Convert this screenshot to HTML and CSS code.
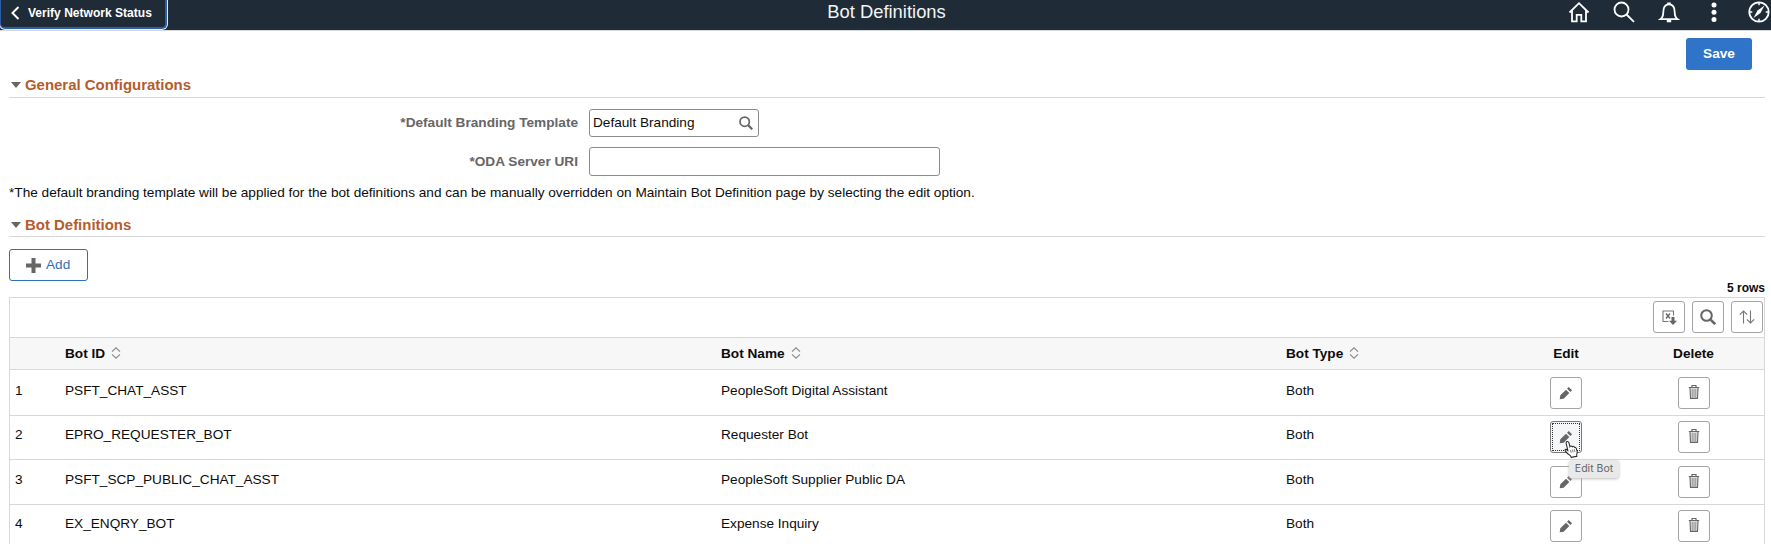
FILE: index.html
```html
<!DOCTYPE html>
<html lang="en">
<head>
<meta charset="utf-8">
<title>Bot Definitions</title>
<link rel="stylesheet" href="styles.css">
</head>
<body>
<svg class="defs" aria-hidden="true">
  <symbol id="pencil" viewBox="0 0 16 16"><path d="M.8 15.200l.7-4.500L8 4.200l3.800 3.800-6.500 6.500zM9.200 3l1.900-1.900 3.800 3.800L13 6.800z"/></symbol>
  <symbol id="trash" viewBox="0 0 12 16"><path d="M.8 3.500h10.400M4 3V1.500h4V3" fill="none" stroke="#666" stroke-width="1.200"/><path d="M2 4l.5 10.400h7L10 4" fill="#ddd" stroke="#666" stroke-width="1.100"/><path d="M4.300 5v8.500M6 5v8.500M7.700 5v8.500" stroke="#888" stroke-width=".8"/></symbol>
  <symbol id="sort" viewBox="0 0 10 12"><path d="M1 4.700L5 .8l4 3.900M1 7.300l4 3.900 4-3.900" fill="none" stroke="#888" stroke-width="1.100"/></symbol>
  <symbol id="lens" viewBox="0 0 16 16"><circle cx="6.500" cy="6.500" r="5.300" fill="none" stroke="currentColor" stroke-width="2"/><path d="M10.300 10.300l4.900 4.900" stroke="currentColor" stroke-width="2.600"/></symbol>
</svg>

<header class="banner">
  <button class="back"><svg width="9" height="14" viewBox="0 0 9 14"><path d="M7.500 1L1.500 7l6 6" fill="none" stroke="#fff" stroke-width="2"/></svg>Verify Network Status</button>
  <h1 class="title">Bot Definitions</h1>
  <nav class="actions">
    <svg width="22" height="22" viewBox="0 0 22 22"><path d="M1.500 11.500L11 2.200l9.500 9.300M4 9.500V20.300h4.700V13.800h4.600v6.500H18V9.500" /></svg>
    <svg width="22" height="22" viewBox="0 0 22 22"><circle cx="8.500" cy="8.500" r="7"/><path d="M13.500 13.500l7.500 7.300"/></svg>
    <svg width="22" height="22" viewBox="0 0 22 22"><path d="M2.300 18.200c2.400-1.600 3-4 3-7.200 0-4.800 2-7.700 5.700-7.700s5.700 2.900 5.700 7.700c0 3.200.6 5.600 3 7.200z"/><path d="M9.200 2.500h3.600M8.800 20.200h4.400" stroke-width="2.200"/></svg>
    <svg width="22" height="22" viewBox="0 0 22 22"><g fill="#fff" stroke="none"><circle cx="11" cy="4" r="2.500"/><circle cx="11" cy="11.200" r="2.500"/><circle cx="11" cy="18.500" r="2.500"/></g></svg>
    <svg width="22" height="22" viewBox="0 0 22 22"><circle cx="11" cy="11" r="9.700"/><path d="M11 2v2.300M11 17.700V20M2 11h2.300M17.700 11H20" stroke-width="1.500"/><path d="M5.500 17l4-7.500 7-5-4 7.500z" fill="#fff" stroke="none"/></svg>
  </nav>
</header>

<main class="page">
  <div class="save-row"><button class="save">Save</button></div>

  <h2 class="section general"><i class="caret"></i>General Configurations</h2>
  <div class="form">
    <label class="label">*Default Branding Template</label>
    <div class="field lookup"><span>Default Branding</span><svg class="look" width="14" height="14" viewBox="0 0 16 16"><use href="#lens" width="16" height="16"/></svg></div>
    <label class="label">*ODA Server URI</label>
    <div class="field uri"></div>
  </div>
  <p class="note">*The default branding template will be applied for the bot definitions and can be manually overridden on Maintain Bot Definition page by selecting the edit option.</p>

  <h2 class="section bots"><i class="caret"></i>Bot Definitions</h2>
  <button class="add"><svg width="15" height="15" viewBox="0 0 15 15"><path d="M7.500 0v15M0 7.500h15" stroke="#666" stroke-width="4"/></svg>Add</button>
  <div class="count">5 rows</div>

  <div class="grid">
    <div class="toolbar">
      <button class="icon-btn"><svg width="15" height="15" viewBox="0 0 15 15"><path d="M11.500 5.500V1H1v10.500h5.500" fill="none" stroke="#777" stroke-width="1.100" /><path d="M4 3.500l4 5M8 3.500l-4 5" stroke="#666" stroke-width="1.400"/><path d="M9.500 7h3v3.700H15L11 14.900l-4-4.200h2.500z" fill="#666"/></svg></button>
      <button class="icon-btn"><svg width="16" height="16"><use href="#lens"/></svg></button>
      <button class="icon-btn"><svg width="16" height="14" viewBox="0 0 16 14"><path d="M4.500 13.500V1M.8 4.700L4.500 1l3.700 3.700M11.500.5V13M7.800 9.300l3.700 3.700 3.700-3.700" fill="none" stroke="#777" stroke-width="1.100"/></svg></button>
    </div>
    <div class="row head">
      <span></span>
      <span>Bot ID<svg class="sort" width="10" height="12"><use href="#sort"/></svg></span>
      <span>Bot Name<svg class="sort" width="10" height="12"><use href="#sort"/></svg></span>
      <span>Bot Type<svg class="sort" width="10" height="12"><use href="#sort"/></svg></span>
      <span class="center">Edit</span>
      <span class="center">Delete</span>
    </div>
    <div class="row first">
      <span>1</span><span>PSFT_CHAT_ASST</span><span>PeopleSoft Digital Assistant</span><span>Both</span>
      <div class="cell"><button class="icon-btn"><svg class="pencil"><use href="#pencil"/></svg></button></div>
      <div class="cell"><button class="icon-btn"><svg class="trash"><use href="#trash"/></svg></button></div>
    </div>
    <div class="row">
      <span>2</span><span>EPRO_REQUESTER_BOT</span><span>Requester Bot</span><span>Both</span>
      <div class="cell"><button class="icon-btn focused"><svg class="pencil"><use href="#pencil"/></svg></button>
        <div class="tip">Edit Bot</div>
        <svg class="hand" viewBox="0 0 16 18"><path d="M4 10L2.300 3.100Q2 1.300 3.300 1t1.900 1.200L6.300 6.500q.4-.9 1.500-.7.7.1 1 .8.5-.7 1.500-.3.600.2.8.9 1.500-.3 2 1.200l.9 3.200q.3 1.800-.5 3.200l.2 2-6 1.100-.7-1.600Q4 14.700 1.300 11q-.6-1.300.5-1.600 1.100-.1 2.200 1.200z" fill="#fff" stroke="#222" stroke-width="1.100"/><path d="M7 10l.7 3M9 9.600l.7 3M11 9.200l.7 3" stroke="#555" stroke-width=".8"/></svg>
      </div>
      <div class="cell"><button class="icon-btn"><svg class="trash"><use href="#trash"/></svg></button></div>
    </div>
    <div class="row">
      <span>3</span><span>PSFT_SCP_PUBLIC_CHAT_ASST</span><span>PeopleSoft Supplier Public DA</span><span>Both</span>
      <div class="cell"><button class="icon-btn"><svg class="pencil"><use href="#pencil"/></svg></button></div>
      <div class="cell"><button class="icon-btn"><svg class="trash"><use href="#trash"/></svg></button></div>
    </div>
    <div class="row">
      <span>4</span><span>EX_ENQRY_BOT</span><span>Expense Inquiry</span><span>Both</span>
      <div class="cell"><button class="icon-btn"><svg class="pencil"><use href="#pencil"/></svg></button></div>
      <div class="cell"><button class="icon-btn"><svg class="trash"><use href="#trash"/></svg></button></div>
    </div>
  </div>
</main>
</body>
</html>
```
FILE: styles.css
```css
* { box-sizing: border-box; }
body {
  margin: 0;
  height: 544px;
  overflow: hidden;
  background: #fff;
  color: #0c0c0c;
  font: 13.630px/16px "Liberation Sans", Arial, sans-serif;
}
.defs { position: absolute; width: 0; height: 0; }
svg { display: block; flex: none; }
button { font: inherit; padding: 0; margin: 0; }
h1, h2, p { margin: 0; }

.banner {
  display: grid;
  grid-template-columns: 1fr auto 1fr;
  height: 31px;
  background: #1f2b37;
  border-bottom: 1px solid #d5d9dd;
}
.back {
  display: flex;
  gap: 8px;
  width: 167px;
  height: 29px;
  padding: 0 0 2px 10px;
  align-items: center;
  justify-self: start;
  background: #1f2b37;
  color: #fff;
  border: 2px solid #2c5fa8;
  border-top: 0;
  border-left-width: 1px;
  border-radius: 0 0 5px 5px;
  box-shadow: 0 0 0 1px #e8eef5;
  font-weight: bold;
  font-size: 12.050px;
}
.title {
  padding-left: 2px;
  color: #f2f4f6;
  font-size: 18.400px;
  font-weight: normal;
  line-height: 24px;
}
.actions {
  display: flex;
  gap: 23px;
  justify-content: flex-end;
  padding: 1px 1px 0 0;
}
.actions svg { fill: none; stroke: #fff; stroke-width: 1.800; }

.page { padding: 0 6px 0 9px; }
.save-row { display: flex; justify-content: flex-end; padding: 7px 13px 0 0; }
.save {
  width: 66px;
  height: 32px;
  border: 0;
  border-radius: 3px;
  background: #2f74c9;
  color: #fff;
  font-weight: bold;
}

.section {
  display: flex;
  align-items: center;
  gap: 4px;
  height: 27px;
  padding: 3px 0 0 2px;
  border-bottom: 1px solid #d8d8d8;
  color: #b55c2c;
  font-size: 14.950px;
}
.caret {
  border: 5.500px solid transparent;
  border-top: 6px solid #666;
  border-bottom: 0;
}
.general { height: 28px; }

.form {
  display: grid;
  grid-template-columns: 569px 351px;
  column-gap: 11px;
  row-gap: 10px;
  align-items: center;
  margin-top: 11px;
}
.label { color: #666; font-weight: bold; text-align: right; }
.field {
  height: 29px;
  border: 1px solid #8c8c8c;
  border-radius: 3px;
  padding: 0 5px 0 3px;
}
.lookup {
  display: flex;
  align-items: center;
  justify-content: space-between;
  width: 170px;
  height: 28px;
}
.look { color: #666; }
.note { margin-top: 9px; white-space: nowrap; }

.bots { margin-top: 9px; }
.add {
  display: flex;
  align-items: center;
  gap: 5px;
  width: 79px;
  height: 32px;
  margin-top: 12px;
  padding-left: 16px;
  background: #fff;
  border: 1px solid #2f70bd;
  border-radius: 3px;
  color: #2f6fc0;
}
.count {
  height: 16px;
  font-size: 12px;
  font-weight: bold;
  line-height: 15px;
  text-align: right;
}

.grid { border: 1px solid #d8d8d8; border-bottom: 0; }
.toolbar {
  display: flex;
  justify-content: flex-end;
  gap: 7px;
  height: 39px;
  padding: 3px 1px 0 0;
}
.icon-btn {
  display: grid;
  place-items: center;
  width: 32px;
  height: 32px;
  background: #fff;
  border: 1px solid #a3a3a8;
  border-radius: 3px;
  color: #666;
}
.row {
  display: grid;
  grid-template-columns: 50px 656px 565px 216px 128px 1fr;
  height: 44.600px;
  padding: 11.600px 7px 0 5px;
  border-bottom: 1px solid #d8d8d8;
}
.row.first { height: 45.600px; padding-top: 12.600px; }
.row.head {
  height: 33px;
  padding-top: 7.500px;
  background: #f7f7f7;
  border-top: 1px solid #d8d8d8;
  font-weight: bold;
}
.head span { display: flex; gap: 6px; }
.head .center { justify-content: center; }
.sort { margin-top: 1px; }
.cell { position: relative; display: flex; justify-content: center; }
.cell > .icon-btn { margin-top: -6px; }
.pencil { width: 14px; height: 14px; fill: #666; }
.trash { width: 12px; height: 16px; margin-top: -2px; }
.focused { border-color: #777; background: #f4f6f8; outline: 1px dotted #333; outline-offset: -3px; }
.tip {
  position: absolute;
  z-index: 2;
  left: 67px;
  top: 33px;
  width: 50px;
  height: 18px;
  background: #e9e9e9;
  border-radius: 3px;
  box-shadow: 0 1px 3px #bbb;
  color: #666;
  font: 10.500px/18px Inter, sans-serif;
  text-align: center;
}
.hand { position: absolute; z-index: 3; left: 62px; top: 13px; width: 15px; height: 18px; }
```
